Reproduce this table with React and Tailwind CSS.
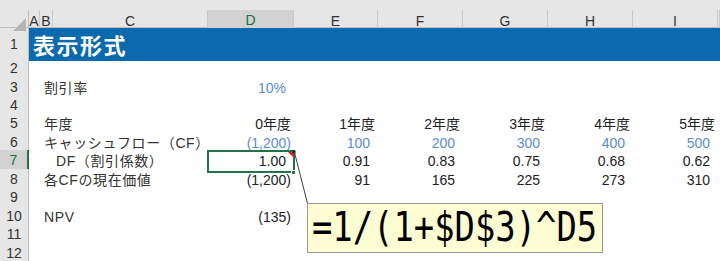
import React from "react";

const GRID =
  "grid grid-cols-[29px_11px_13px_155px_86px_84px_85px_85px_85px_85px_1fr]";
const FONT = { fontFamily: '"Liberation Sans", "Noto Sans CJK JP", sans-serif' };

const rowHeights = {
  2: "h-[19px]",
  3: "h-[18px]",
  4: "h-[18px]",
  5: "h-[19px]",
  6: "h-[18px]",
  7: "h-[19px]",
  8: "h-[18px]",
  9: "h-[19px]",
  10: "h-[18px]",
  11: "h-[19px]",
  12: "h-[18px]",
};

function RowHead({ n, active }) {
  return (
    <div
      className={
        "flex items-center justify-center text-[14px] border-b border-[#d6d6d6] " +
        (active
          ? "bg-[#d2d2d2] text-[#1e6b40] border-r-2 border-r-[#217346]"
          : "bg-[#e6e6e6] text-[#333] border-r border-r-[#bdbdbd]")
      }
    >
      {n}
    </div>
  );
}

function Label({ children, indent }) {
  return (
    <div
      className={
        "col-start-3 col-span-2 flex items-center whitespace-nowrap text-[14px] text-[#333] tracking-[0.6px] " +
        (indent ? "pl-[16px]" : "pl-[4px]")
      }
    >
      {children}
    </div>
  );
}

function Val({ children, blue, neg, year, col }) {
  const colStart = {
    D: "col-start-5",
    E: "col-start-6",
    F: "col-start-7",
    G: "col-start-8",
    H: "col-start-9",
    I: "col-start-10",
  }[col];
  return (
    <div
      className={
        colStart +
        " flex items-center justify-end whitespace-nowrap text-[14px] " +
        (blue ? "text-[#5a8bd0] " : "text-[#222] ") +
        (neg || year ? "pr-[3px]" : "pr-[8px]")
      }
    >
      {children}
    </div>
  );
}

function Row({ n, children, active }) {
  return (
    <div className={GRID + " " + rowHeights[n]}>
      <RowHead n={n} active={active} />
      {children}
    </div>
  );
}

export default function App() {
  const cols = ["A", "B", "C", "D", "E", "F", "G", "H", "I", ""];
  return (
    <div
      className="relative w-[720px] h-[261px] overflow-hidden bg-white"
      style={FONT}
    >
      {/* top band */}
      <div className="h-[10px] bg-[#e6e6e6]" />
      {/* column headers */}
      <div className={GRID + " h-[18px] bg-[#e6e6e6] border-b border-[#bdbdbd]"}>
        <div className="relative border-r border-[#bdbdbd]">
          <div className="absolute right-[2px] bottom-[2px] w-0 h-0 border-l-[13px] border-l-transparent border-b-[13px] border-b-[#b4b4b4]" />
        </div>
        {cols.map((c, i) => (
          <div
            key={i}
            className={
              "flex items-center justify-center text-[14px] border-r border-[#cacaca] " +
              (c === "D"
                ? "bg-[#d2d2d2] text-[#1e6b40] border-b-2 border-b-[#217346]"
                : "text-[#333]")
            }
          >
            {c}
          </div>
        ))}
      </div>

      {/* row 1 title */}
      <div className={GRID + " h-[30px]"}>
        <RowHead n={1} />
        <div className="col-start-2 col-span-10 bg-[#0b69ad] flex items-center pl-[4px]">
          <span
            className="text-white text-[22px] font-bold tracking-[1.5px] whitespace-nowrap"
            style={{ fontFamily: '"Noto Sans CJK JP", sans-serif' }}
          >
            表示形式
          </span>
        </div>
      </div>

      <Row n={2} />
      <Row n={3}>
        <Label>割引率</Label>
        <Val col="D" blue>
          10%
        </Val>
      </Row>
      <Row n={4} />
      <Row n={5}>
        <Label>年度</Label>
        <Val col="D" year>0年度</Val>
        <Val col="E" year>1年度</Val>
        <Val col="F" year>2年度</Val>
        <Val col="G" year>3年度</Val>
        <Val col="H" year>4年度</Val>
        <Val col="I" year>5年度</Val>
      </Row>
      <Row n={6}>
        <Label>キャッシュフロー（CF）</Label>
        <Val col="D" blue neg>(1,200)</Val>
        <Val col="E" blue>100</Val>
        <Val col="F" blue>200</Val>
        <Val col="G" blue>300</Val>
        <Val col="H" blue>400</Val>
        <Val col="I" blue>500</Val>
      </Row>
      <Row n={7} active>
        <Label indent>DF（割引係数）</Label>
        <div className="col-start-5 relative flex items-center justify-end pr-[8px] text-[14px] text-[#222]">
          <div className="absolute left-[-1px] right-[-1px] top-0 bottom-[-1px] border-2 border-[#217346]" />
          <div className="absolute right-[0px] top-[2px] w-0 h-0 border-l-[6px] border-l-transparent border-t-[6px] border-t-[#e8201c]" />
          <div className="absolute right-[-2px] bottom-[-3px] w-[5px] h-[5px] bg-[#217346] border border-white" />
          <span className="relative">1.00</span>
        </div>
        <Val col="E">0.91</Val>
        <Val col="F">0.83</Val>
        <Val col="G">0.75</Val>
        <Val col="H">0.68</Val>
        <Val col="I">0.62</Val>
      </Row>
      <Row n={8}>
        <Label>各CFの現在価値</Label>
        <Val col="D" neg>(1,200)</Val>
        <Val col="E">91</Val>
        <Val col="F">165</Val>
        <Val col="G">225</Val>
        <Val col="H">273</Val>
        <Val col="I">310</Val>
      </Row>
      <Row n={9} />
      <Row n={10}>
        <Label>NPV</Label>
        <Val col="D" neg>(135)</Val>
      </Row>
      <Row n={11} />
      <Row n={12} />

      {/* callout connector */}
      <svg
        className="absolute left-0 top-0 pointer-events-none"
        width="720"
        height="261"
      >
        <line x1="294.5" y1="152.5" x2="307.5" y2="203.5" stroke="#404040" strokeWidth="1" />
        <rect x="292.5" y="150.5" width="3" height="3" fill="#222" />
      </svg>

      {/* callout box */}
      <div className="absolute left-[307px] top-[203px] w-[296px] h-[50px] bg-[#fdfdd4] border border-[#9a9a9a] overflow-hidden">
        <span
          className="absolute left-[4px] top-[0px] inline-block origin-left scale-x-[0.94] scale-y-[1.12] text-[36px] leading-[48px] text-black whitespace-nowrap"
          style={{ fontFamily: '"DejaVu Sans Mono", monospace' }}
        >
          =1/(1+$D$3)^D5
        </span>
      </div>
    </div>
  );
}
